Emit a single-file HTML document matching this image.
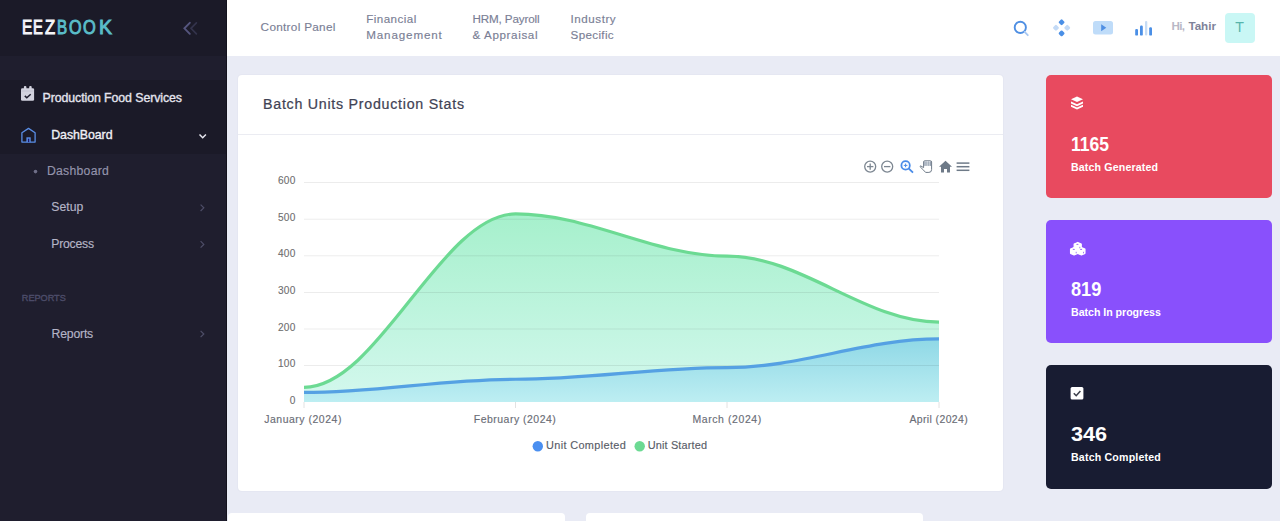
<!DOCTYPE html>
<html><head><meta charset="utf-8"><title>EEZBOOK</title>
<style>
html,body{margin:0;padding:0;width:1280px;height:521px;overflow:hidden;background:#e9ebf5;font-family:"Liberation Sans",sans-serif;}
.t{position:absolute;white-space:nowrap;line-height:1;}
.yl{width:40px;text-align:right;letter-spacing:0.2px;color:#6e6e6e;-webkit-text-stroke:0.1px #6e6e6e;}
.a{position:absolute;}
.lg{top:18.4px;transform-origin:0 0;font-size:19.6px;-webkit-text-stroke:1px currentColor;}
</style></head><body>
<!-- sidebar -->
<div class="a" style="left:0;top:0;width:227px;height:521px;background:#1f1e2e"></div>
<div class="a" style="left:0;top:0;width:227px;height:56px;background:#1b1a28"></div>
<div class="a" style="left:0;top:80px;width:227px;height:74px;background:#1b1a28"></div>
<div class="a" style="left:226px;top:0;width:1px;height:521px;background:#13121d"></div>
<!-- header -->
<div class="a" style="left:227px;top:0;width:1053px;height:56px;background:#ffffff"></div>
<!-- cards -->
<div class="a" style="left:238px;top:75px;width:765px;height:416px;background:#ffffff;border-radius:4px;box-shadow:0 0 2px rgba(40,40,80,0.07)"></div>
<div class="a" style="left:238px;top:134px;width:765px;height:1px;background:#ebecf2"></div>
<div class="a" style="left:1046px;top:75px;width:226px;height:123.3px;background:#e84a5f;border-radius:5px"></div>
<div class="a" style="left:1046px;top:220px;width:226px;height:123px;background:#8950fc;border-radius:5px"></div>
<div class="a" style="left:1046px;top:365px;width:226px;height:123.5px;background:#181c32;border-radius:5px"></div>
<div class="a" style="left:228px;top:513px;width:337px;height:20px;background:#ffffff;border-radius:4px"></div>
<div class="a" style="left:586px;top:513px;width:337px;height:20px;background:#ffffff;border-radius:4px"></div>
<!-- avatar -->
<div class="a" style="left:1225px;top:12.5px;width:30px;height:30px;background:#c9f7f5;border-radius:4px"></div>

<svg class="a" style="left:0;top:0" width="1280" height="521" viewBox="0 0 1280 521">
 <defs>
  <linearGradient id="gg" x1="0" y1="0" x2="0" y2="1" gradientUnits="objectBoundingBox">
   <stop offset="0" stop-color="#a6f0cc"/><stop offset="1" stop-color="#d4f8ee"/>
  </linearGradient>
  <linearGradient id="bg" x1="0" y1="0" x2="0" y2="1" gradientUnits="objectBoundingBox">
   <stop offset="0" stop-color="#8fd8e6"/><stop offset="1" stop-color="#bdeef2"/>
  </linearGradient>
 </defs>
 <!-- logo chevrons -->
 <polyline points="189.8,22.8 184.4,28.3 189.8,33.8" fill="none" stroke="#55557e" stroke-width="1.9" stroke-linecap="round"/>
 <polyline points="196.4,22.8 191,28.3 196.4,33.8" fill="none" stroke="#33334b" stroke-width="1.7" stroke-linecap="round"/>
 <!-- calendar check icon -->
 <g fill="#d2d2de">
  <rect x="21" y="88.3" width="13.1" height="12.4" rx="1.3"/>
  <rect x="23.9" y="86.1" width="2.5" height="4" rx="1"/>
  <rect x="29.2" y="86.1" width="2.5" height="4" rx="1"/>
 </g>
 <line x1="21.5" y1="91" x2="33.6" y2="91" stroke="#b9b9c8" stroke-width="0.6"/>
 <polyline points="24.8,95.9 26.8,97.7 30.7,94.2" fill="none" stroke="#1d1c2c" stroke-width="1.5"/>
 <!-- house icon -->
 <path d="M21.9 132.8 L28.5 128.4 L35.1 132.8 L35.1 142.1 L21.9 142.1 Z" fill="none" stroke="#5a8ee6" stroke-width="1.3" stroke-linejoin="round"/>
 <rect x="26.4" y="137.3" width="4.3" height="4.8" fill="#5a8ee6"/>
 <rect x="27.9" y="138.7" width="1.4" height="3.4" fill="#1b1a6a"/>
 <!-- chevron down -->
 <polyline points="199.5,134.5 202.7,137.7 205.9,134.5" fill="none" stroke="#e8e8f0" stroke-width="1.5"/>
 <!-- bullet -->
 <circle cx="35.5" cy="171.6" r="1.8" fill="#6f6f88"/>
 <!-- chevrons right -->
 <g fill="none" stroke="#4e4e68" stroke-width="1.2">
  <polyline points="200.6,204.6 203.8,207.8 200.6,211"/>
  <polyline points="200.6,241.2 203.8,244.4 200.6,247.6"/>
  <polyline points="200.6,330.8 203.8,334 200.6,337.2"/>
 </g>
 <!-- header icons -->
 <circle cx="1020.3" cy="27.4" r="5.6" fill="none" stroke="#4f8fe3" stroke-width="1.9"/>
 <line x1="1024.6" y1="31.8" x2="1027.8" y2="35.2" stroke="#a8c8f2" stroke-width="1.8" stroke-linecap="round"/>
 <g transform="translate(1061.6,27.8)">
  <rect x="-2.4" y="-7.95" width="4.8" height="4.8" rx="1.2" transform="rotate(45 0 -5.55)" fill="#4a8fe6"/>
  <rect x="-2.4" y="3.15" width="4.8" height="4.8" rx="1.2" transform="rotate(45 0 5.55)" fill="#4a8fe6"/>
  <rect x="-8.05" y="-2.4" width="4.8" height="4.8" rx="1.2" transform="rotate(45 -5.65 0)" fill="#c3daf6"/>
  <rect x="3.25" y="-2.4" width="4.8" height="4.8" rx="1.2" transform="rotate(45 5.65 0)" fill="#c3daf6"/>
 </g>
 <rect x="1093" y="21" width="20" height="13.4" rx="2.5" fill="#bfdcf9"/>
 <path d="M1101.2 24.2 L1106.3 27.7 L1101.2 31.2 Z" fill="#4f8fe3"/>
 <g fill="#4a8fe6">
  <rect x="1135.2" y="28.9" width="2.8" height="6.7" rx="1.2"/>
  <rect x="1140" y="25.5" width="2.8" height="10.1" rx="1.2"/>
  <rect x="1145" y="21" width="2.3" height="14.6" rx="1.1" fill="#c6dcf5"/>
  <rect x="1149.2" y="27.2" width="2.8" height="8.4" rx="1.2"/>
 </g>
 <path d="M304.00 387.33 C378.08 387.33 441.58 213.90 515.67 213.90 C589.75 213.90 653.25 256.07 727.33 256.07 C801.42 256.07 864.92 322.07 939.00 322.07 L939 402 L304 402 Z" fill="url(#gg)"/>
 <path d="M304.00 392.47 C378.08 392.47 441.58 379.27 515.67 379.27 C589.75 379.27 653.25 367.53 727.33 367.53 C801.42 367.53 864.92 338.93 939.00 338.93 L939 402 L304 402 Z" fill="url(#bg)"/>
 <!-- chart grid -->
 <g stroke="#000000" stroke-opacity="0.075" stroke-width="1">
  <line x1="304" y1="182.5" x2="939" y2="182.5"/>
  <line x1="304" y1="219.2" x2="939" y2="219.2"/>
  <line x1="304" y1="255.8" x2="939" y2="255.8"/>
  <line x1="304" y1="292.5" x2="939" y2="292.5"/>
  <line x1="304" y1="329" x2="939" y2="329"/>
  <line x1="304" y1="365.5" x2="939" y2="365.5"/>
 </g>
 <path d="M304.00 387.33 C378.08 387.33 441.58 213.90 515.67 213.90 C589.75 213.90 653.25 256.07 727.33 256.07 C801.42 256.07 864.92 322.07 939.00 322.07" fill="none" stroke="#6cda93" stroke-width="3.2" stroke-linecap="butt"/>
 <path d="M304.00 392.47 C378.08 392.47 441.58 379.27 515.67 379.27 C589.75 379.27 653.25 367.53 727.33 367.53 C801.42 367.53 864.92 338.93 939.00 338.93" fill="none" stroke="#55a1e3" stroke-width="3.2" stroke-linecap="butt"/>
 <g stroke="#e2e2e2" stroke-width="1">
  <line x1="304" y1="402" x2="304" y2="408"/>
  <line x1="515.5" y1="402" x2="515.5" y2="408"/>
  <line x1="727" y1="402" x2="727" y2="408"/>
  <line x1="939" y1="402" x2="939" y2="408"/>
 </g>
 <!-- legend dots -->
 <circle cx="537.8" cy="446.2" r="5.2" fill="#4a8ff0"/>
 <circle cx="639.7" cy="446.2" r="5.2" fill="#6cda93"/>
 <!-- toolbar icons -->
 <g fill="none" stroke="#7d8792" stroke-width="1.3">
  <circle cx="870.2" cy="166.6" r="5.5"/>
  <line x1="867" y1="166.6" x2="873.4" y2="166.6"/><line x1="870.2" y1="163.4" x2="870.2" y2="169.8"/>
  <circle cx="887.2" cy="166.6" r="5.5"/>
  <line x1="884" y1="166.6" x2="890.4" y2="166.6"/>
 </g>
 <g fill="none" stroke="#4a8ce8" stroke-width="1.8">
  <circle cx="905.6" cy="165.4" r="4.2"/>
  <line x1="908.6" y1="168.4" x2="913" y2="172.6" stroke-width="1.9"/>
 </g>
 <path d="M903.8 165.4 h3.6 M905.6 163.6 v3.6" stroke="#4a8ce8" stroke-width="1"/>
 <path d="M923.6 170.2 L920.2 166.9 Q919.7 166.1 920.7 165.9 L923.6 167.6 L923.6 162 Q923.6 160.8 924.7 160.8 L930.4 160.8 Q931.6 160.8 931.6 162 L931.6 169.6 Q931.6 172.4 928.9 172.4 L925.6 172.4 Z" fill="#ffffff" stroke="#6e7a88" stroke-width="1"/>
 <rect x="924.3" y="161.3" width="6.6" height="4.6" fill="#8e9bab"/>
 <g stroke="#ffffff" stroke-width="0.6"><line x1="926" y1="161" x2="926" y2="166"/><line x1="927.7" y1="161" x2="927.7" y2="166"/><line x1="929.3" y1="161" x2="929.3" y2="166"/></g>
 <path d="M939 166.8 L945.5 160.8 L952 166.8 L950 166.8 L950 172.5 L947 172.5 L947 169 L944 169 L944 172.5 L941 172.5 L941 166.8 Z" fill="#6e7a88"/>
 <g stroke="#6e7a88" stroke-width="1.5">
  <line x1="956.6" y1="163.1" x2="969.4" y2="163.1"/>
  <line x1="956.6" y1="166.7" x2="969.4" y2="166.7"/>
  <line x1="956.6" y1="170.3" x2="969.4" y2="170.3"/>
 </g>
 <!-- stat icons -->
 <g fill="#ffffff">
  <path d="M1071 99.3 L1077 96.6 L1083 99.3 L1077 102 Z"/>
  <path d="M1071 101.6 L1077 104.3 L1083 101.6 L1083 103.6 L1077 106.3 L1071 103.6 Z"/>
  <path d="M1071 104.8 L1077 107.5 L1083 104.8 L1083 106.8 L1077 109.5 L1071 106.8 Z"/>
 </g>
 <g fill="#ffffff" stroke="#ffffff" stroke-width="1.3" stroke-linejoin="round">
  <path d="M1074.20 244.10 L1077.70 242.50 L1081.20 244.10 L1081.20 248.30 L1077.70 249.90 L1074.20 248.30 Z"/>
  <path d="M1070.60 249.10 L1074.10 247.50 L1077.60 249.10 L1077.60 253.30 L1074.10 254.90 L1070.60 253.30 Z"/>
  <path d="M1077.90 249.10 L1081.40 247.50 L1084.90 249.10 L1084.90 253.30 L1081.40 254.90 L1077.90 253.30 Z"/>
 </g>
 <g fill="#8a55f0" opacity="0.75">
  <ellipse cx="1077.40" cy="244.40" rx="1.1" ry="0.6"/><rect x="1079.30" y="246.80" width="1" height="1.5"/>
  <ellipse cx="1073.80" cy="249.40" rx="1.1" ry="0.6"/><rect x="1075.70" y="251.80" width="1" height="1.5"/>
  <ellipse cx="1081.10" cy="249.40" rx="1.1" ry="0.6"/><rect x="1083.00" y="251.80" width="1" height="1.5"/>
 </g>
 <rect x="1070.6" y="387" width="12.8" height="12.5" rx="1.5" fill="#ffffff"/>
 <polyline points="1073.8,393.3 1076.2,395.7 1080.4,391" fill="none" stroke="#3d404c" stroke-width="1.6"/>
</svg>
<span class="t lg" style="left:22.34px;color:#f4f4f8;transform:scaleX(0.781)">E</span><span class="t lg" style="left:33.29px;color:#f4f4f8;transform:scaleX(0.753)">E</span><span class="t lg" style="left:44.97px;color:#f4f4f8;transform:scaleX(0.847)">Z</span><span class="t lg" style="left:57.05px;color:#5abcc8;transform:scaleX(0.776)">B</span><span class="t lg" style="left:68.54px;color:#5abcc8;transform:scaleX(0.822)">O</span><span class="t lg" style="left:83.12px;color:#5abcc8;transform:scaleX(0.837)">O</span><span class="t lg" style="left:98.91px;color:#5abcc8;transform:scaleX(0.987)">K</span>
<span class="t" id="t0" style="left:42.50px;top:91.54px;font-size:12.35px;color:#e4e4ee;font-weight:normal;letter-spacing:-0.080px;-webkit-text-stroke:0.35px #e4e4ee;">Production Food Services</span>
<span class="t" id="t1" style="left:51.25px;top:128.64px;font-size:12.35px;color:#f0f0f6;font-weight:normal;letter-spacing:-0.064px;-webkit-text-stroke:0.35px #f0f0f6;">DashBoard</span>
<span class="t" id="t2" style="left:46.90px;top:164.96px;font-size:12.21px;color:#9494ac;font-weight:normal;letter-spacing:0.287px;-webkit-text-stroke:0.15px #9494ac;">Dashboard</span>
<span class="t" id="t3" style="left:51.30px;top:200.86px;font-size:12.21px;color:#b4b4c6;font-weight:normal;letter-spacing:0.052px;-webkit-text-stroke:0.15px #b4b4c6;">Setup</span>
<span class="t" id="t4" style="left:51.30px;top:237.66px;font-size:12.21px;color:#b4b4c6;font-weight:normal;letter-spacing:-0.232px;-webkit-text-stroke:0.15px #b4b4c6;">Process</span>
<span class="t" id="t5" style="left:21.80px;top:294.05px;font-size:9.16px;color:#4d4d6a;font-weight:normal;letter-spacing:-0.018px;-webkit-text-stroke:0.35px #4d4d6a;">REPORTS</span>
<span class="t" id="t6" style="left:51.60px;top:327.66px;font-size:12.21px;color:#b4b4c6;font-weight:normal;letter-spacing:-0.189px;-webkit-text-stroke:0.15px #b4b4c6;">Reports</span>
<span class="t" id="t7" style="left:260.60px;top:20.63px;font-size:11.77px;color:#7a7e95;font-weight:normal;letter-spacing:0.292px;-webkit-text-stroke:0.15px #7a7e95;">Control Panel</span>
<span class="t" id="t8" style="left:366.25px;top:13.15px;font-size:11.63px;color:#7a7e95;font-weight:normal;letter-spacing:0.434px;-webkit-text-stroke:0.15px #7a7e95;">Financial</span>
<span class="t" id="t9" style="left:366.25px;top:28.90px;font-size:11.63px;color:#7a7e95;font-weight:normal;letter-spacing:0.860px;-webkit-text-stroke:0.15px #7a7e95;">Management</span>
<span class="t" id="t10" style="left:472.50px;top:13.15px;font-size:11.63px;color:#7a7e95;font-weight:normal;letter-spacing:-0.134px;-webkit-text-stroke:0.15px #7a7e95;">HRM, Payroll</span>
<span class="t" id="t11" style="left:472.50px;top:28.90px;font-size:11.63px;color:#7a7e95;font-weight:normal;letter-spacing:0.619px;-webkit-text-stroke:0.15px #7a7e95;">&amp; Appraisal</span>
<span class="t" id="t12" style="left:570.60px;top:13.15px;font-size:11.63px;color:#7a7e95;font-weight:normal;letter-spacing:0.520px;-webkit-text-stroke:0.15px #7a7e95;">Industry</span>
<span class="t" id="t13" style="left:570.60px;top:28.90px;font-size:11.63px;color:#7a7e95;font-weight:normal;letter-spacing:0.340px;-webkit-text-stroke:0.15px #7a7e95;">Specific</span>
<span class="t" id="t14" style="left:1171.60px;top:20.45px;font-size:11.63px;color:#b8b8c6;font-weight:bold;letter-spacing:-0.780px;">Hi,</span>
<span class="t" id="t15" style="left:1188.40px;top:20.45px;font-size:11.63px;color:#7e8299;font-weight:bold;letter-spacing:0.009px;">Tahir</span>
<span class="t" id="t16" style="left:1235.20px;top:19.64px;font-size:14.24px;color:#58b4ab;font-weight:normal;letter-spacing:0.000px;">T</span>
<span class="t" id="t17" style="left:263.00px;top:97.24px;font-size:14.24px;color:#3f4254;font-weight:normal;letter-spacing:0.734px;-webkit-text-stroke:0.22px #3f4254;">Batch Units Production Stats</span>
<span class="t" id="t18" style="left:264.20px;top:415.14px;font-size:10.47px;color:#6a6d76;font-weight:normal;letter-spacing:0.521px;-webkit-text-stroke:0.15px #6a6d76;">January (2024)</span>
<span class="t" id="t19" style="left:473.75px;top:415.14px;font-size:10.47px;color:#6a6d76;font-weight:normal;letter-spacing:0.496px;-webkit-text-stroke:0.15px #6a6d76;">February (2024)</span>
<span class="t" id="t20" style="left:692.50px;top:415.14px;font-size:10.47px;color:#6a6d76;font-weight:normal;letter-spacing:0.589px;-webkit-text-stroke:0.15px #6a6d76;">March (2024)</span>
<span class="t" id="t21" style="left:909.40px;top:415.14px;font-size:10.47px;color:#6a6d76;font-weight:normal;letter-spacing:0.389px;-webkit-text-stroke:0.15px #6a6d76;">April (2024)</span>
<span class="t" id="t22" style="left:546.00px;top:439.52px;font-size:10.90px;color:#595d68;font-weight:normal;letter-spacing:0.364px;-webkit-text-stroke:0.15px #595d68;">Unit Completed</span>
<span class="t" id="t23" style="left:647.70px;top:439.52px;font-size:10.90px;color:#595d68;font-weight:normal;letter-spacing:0.162px;-webkit-text-stroke:0.15px #595d68;">Unit Started</span>
<span class="t" id="t24" style="left:1071.10px;top:134.86px;font-size:19.77px;color:#ffffff;font-weight:bold;transform:scaleX(0.8860);transform-origin:0 0;">1165</span>
<span class="t" id="t25" style="left:1071.00px;top:162.02px;font-size:10.61px;color:#ffffff;font-weight:bold;letter-spacing:0.150px;">Batch Generated</span>
<span class="t" id="t26" style="left:1071.00px;top:280.26px;font-size:19.77px;color:#ffffff;font-weight:bold;transform:scaleX(0.9186);transform-origin:0 0;">819</span>
<span class="t" id="t27" style="left:1071.00px;top:307.02px;font-size:10.61px;color:#ffffff;font-weight:bold;letter-spacing:-0.025px;">Batch In progress</span>
<span class="t" id="t28" style="left:1071.00px;top:424.86px;font-size:19.77px;color:#ffffff;font-weight:bold;transform:scaleX(1.0914);transform-origin:0 0;">346</span>
<span class="t" id="t29" style="left:1071.00px;top:452.02px;font-size:10.61px;color:#ffffff;font-weight:bold;letter-spacing:0.182px;">Batch Completed</span>
<span class="t yl" style="left:255.50px;top:175.85px;font-size:10.10px;">600</span>
<span class="t yl" style="left:255.50px;top:212.52px;font-size:10.10px;">500</span>
<span class="t yl" style="left:255.50px;top:249.18px;font-size:10.10px;">400</span>
<span class="t yl" style="left:255.50px;top:285.85px;font-size:10.10px;">300</span>
<span class="t yl" style="left:255.50px;top:322.52px;font-size:10.10px;">200</span>
<span class="t yl" style="left:255.50px;top:359.18px;font-size:10.10px;">100</span>
<span class="t yl" style="left:255.50px;top:395.85px;font-size:10.10px;">0</span>
</body></html>
